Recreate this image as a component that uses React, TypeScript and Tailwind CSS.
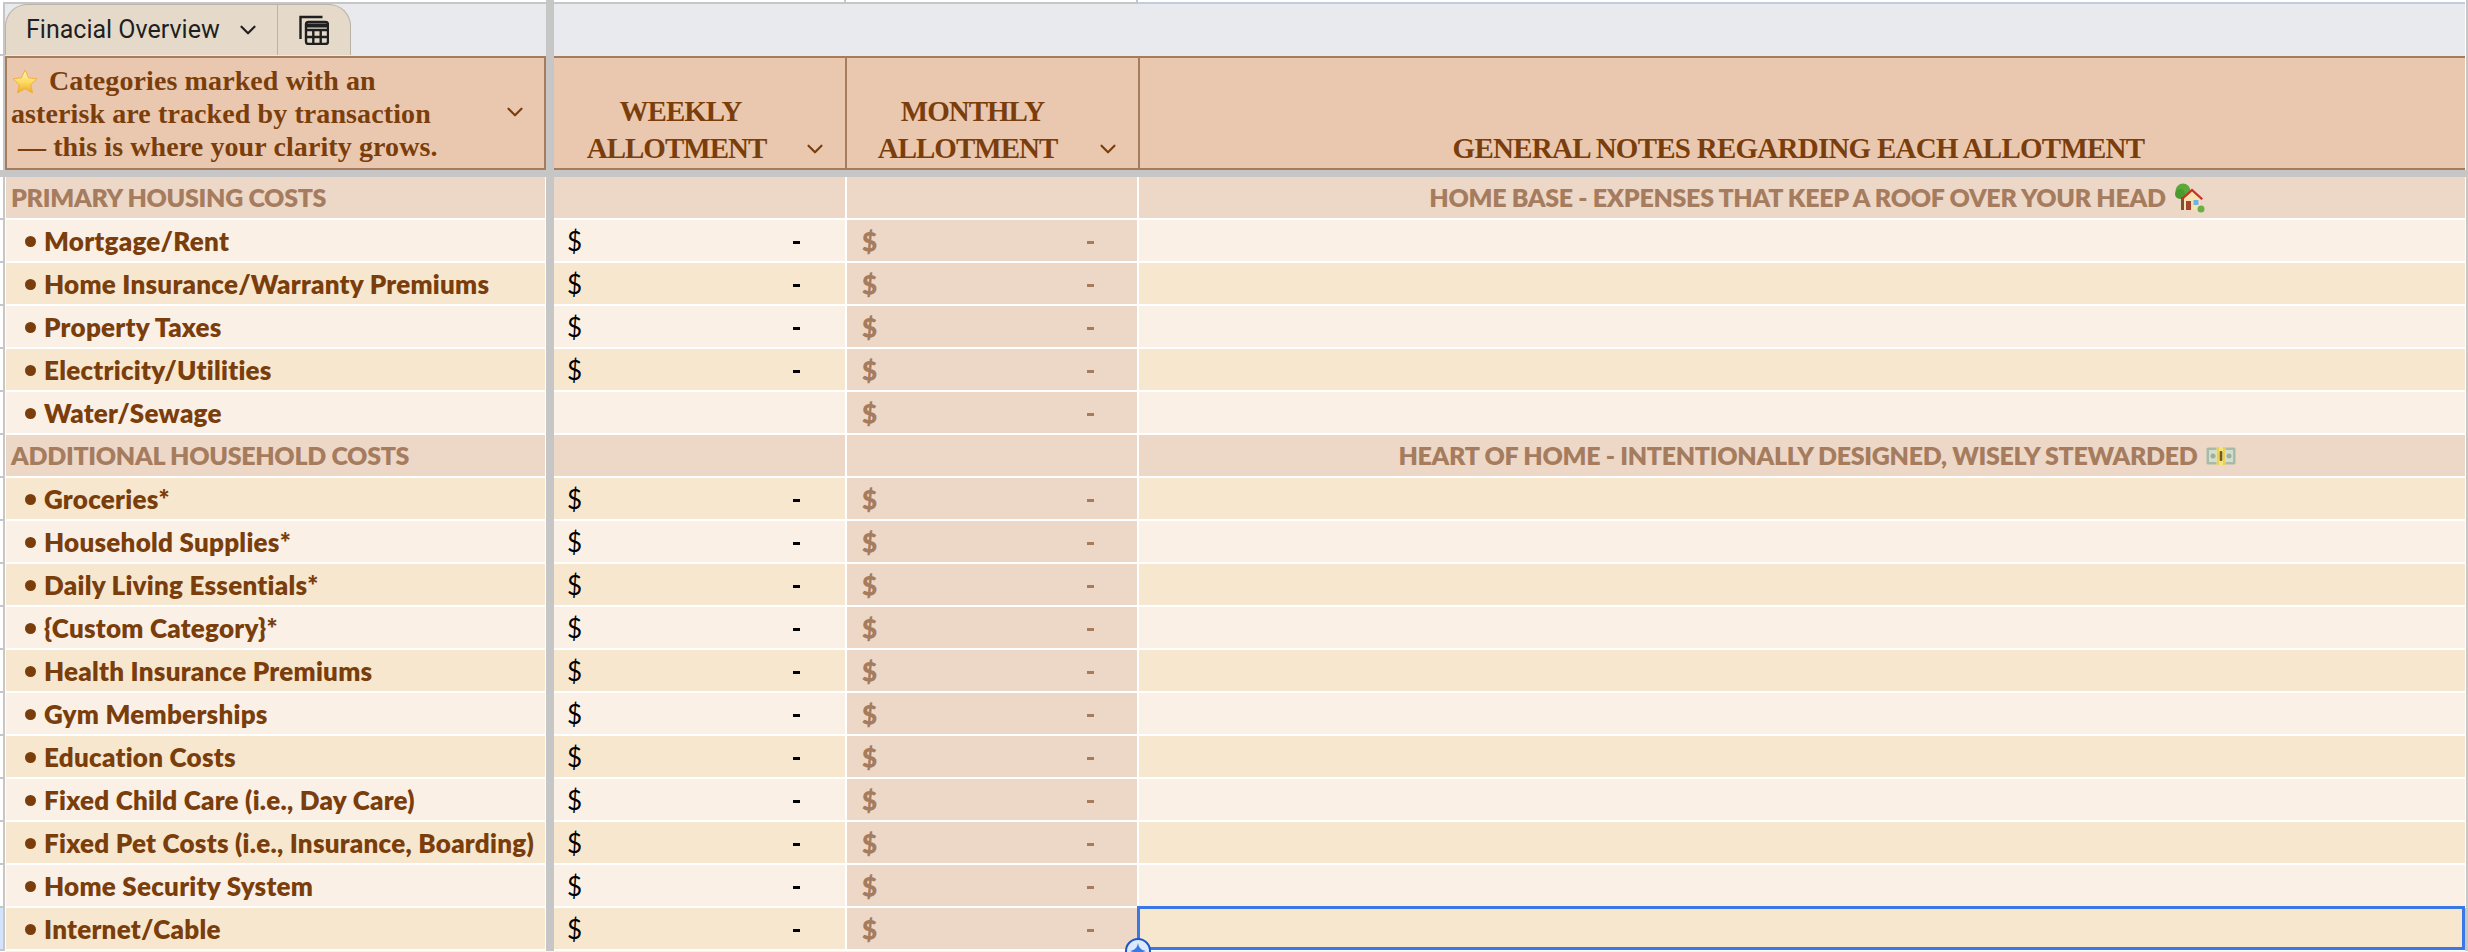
import { ChevronDown } from "lucide-react"

const SERIF = "font-['Liberation_Serif',serif] font-bold"
const SECTION_TEXT = "font-['Lato',sans-serif] font-extrabold tracking-[-0.3px] text-[25px] text-[#a67c5f]"

const LIGHT = "bg-[#faf0e6]"
const TAN = "bg-[#f7e7ce]"
const SECTION = "bg-[#edd8c8]"

type Item = { label: string; shade?: string; noWeekly?: boolean; active?: boolean }

const housing: Item[] = [
  { label: "Mortgage/Rent", shade: LIGHT },
  { label: "Home Insurance/Warranty Premiums", shade: TAN },
  { label: "Property Taxes", shade: LIGHT },
  { label: "Electricity/Utilities", shade: TAN },
  { label: "Water/Sewage", shade: LIGHT, noWeekly: true },
]

const household: Item[] = [
  { label: "Groceries*", shade: TAN },
  { label: "Household Supplies*", shade: LIGHT },
  { label: "Daily Living Essentials*", shade: TAN },
  { label: "{Custom Category}*", shade: LIGHT },
  { label: "Health Insurance Premiums", shade: TAN },
  { label: "Gym Memberships", shade: LIGHT },
  { label: "Education Costs", shade: TAN },
  { label: "Fixed Child Care (i.e., Day Care)", shade: LIGHT },
  { label: "Fixed Pet Costs (i.e., Insurance, Boarding)", shade: TAN },
  { label: "Home Security System", shade: LIGHT },
  { label: "Internet/Cable", shade: TAN, active: true },
]

function Gutter({ active }: { active?: boolean }) {
  return (
    <div className="flex h-full w-[6px] shrink-0">
      <div className={`h-full w-[3px] border-b-2 border-[#c6c6c6] ${active ? "bg-[#d3e3fd]" : "bg-white"}`} />
      <div className="h-full w-[2px] bg-[#c6c6c6]" />
      <div className="h-full w-px bg-white" />
    </div>
  )
}

function Frozen() {
  return <div className="h-full w-[8px] shrink-0 bg-[#c6c6c6]" />
}

function RightEdge({ active }: { active?: boolean }) {
  return <div className={`h-full w-[3px] shrink-0 ${active ? "bg-[#c6c6c6]" : "border-r-2 border-[#c6c6c6]"}`} />
}

function StarIcon() {
  return (
    <svg width="26" height="25" viewBox="0 0 26 25" className="shrink-0">
      <defs>
        <linearGradient id="star" x1="0" y1="0" x2="0" y2="1">
          <stop offset="0" stopColor="#fff6b8" />
          <stop offset="0.55" stopColor="#fcd95e" />
          <stop offset="1" stopColor="#f2a52c" />
        </linearGradient>
      </defs>
      <path
        d="M13 1l3.6 7.8 8.4 1-6.2 5.8 1.700 8.400L13 19.800 5.500 24l1.700-8.400L1 9.800l8.400-1z"
        fill="url(#star)"
        stroke="#f0b040"
        strokeWidth="1"
        strokeLinejoin="round"
      />
    </svg>
  )
}

function HouseIcon() {
  return (
    <svg width="31" height="30" viewBox="0 0 31 30" className="shrink-0">
      <circle cx="9" cy="8" r="7.500" fill="#5da83a" />
      <circle cx="6" cy="11" r="5" fill="#4c9a2f" />
      <rect x="7" y="14" width="3" height="13" fill="#7a5230" />
      <path d="M10 15l8-7 8 7v12H10z" fill="#f8e3b0" />
      <path d="M7 15.500L18 5.500l11 10-1.600 1.400L18 8.500 8.600 16.900z" fill="#c9302c" />
      <rect x="12" y="18" width="5" height="9" fill="#a5432e" />
      <rect x="19.500" y="17" width="5" height="5" fill="#6fb2e8" />
      <circle cx="27" cy="26" r="3.500" fill="#69b044" />
    </svg>
  )
}

function MoneyIcon() {
  return (
    <svg width="30" height="18" viewBox="0 0 30 18" className="shrink-0">
      <rect x="0.500" y="0.500" width="29" height="17" rx="1.500" fill="#a9bba6" />
      <rect x="3" y="3" width="24" height="12" fill="#d3ddd0" />
      <circle cx="7" cy="9" r="2.500" fill="#9db09a" />
      <circle cx="23" cy="9" r="2.500" fill="#9db09a" />
      <rect x="10.500" y="0" width="9" height="18" fill="#f6e27a" />
      <rect x="11.500" y="0" width="1" height="18" fill="#e2b93b" />
      <rect x="17.500" y="0" width="1" height="18" fill="#e2b93b" />
      <rect x="13.700" y="4" width="2.600" height="10" rx="1" fill="#6a5a22" />
    </svg>
  )
}

function SheetIcon() {
  return (
    <svg width="30" height="30" viewBox="0 0 30 30" fill="none" stroke="#1f1f1f" strokeWidth="2.400">
      <path d="M1.500 24V2h22" />
      <rect x="7" y="7" width="22" height="22" rx="2.500" />
      <path d="M7 15h22M7 22h22M14.300 15v14M21.700 15v14" />
      <path d="M7 10.500h22" strokeWidth="4" />
    </svg>
  )
}

function Sparkle() {
  return (
    <div className="absolute -bottom-[15px] -left-[14px] z-10 flex h-[26px] w-[26px] items-center justify-center rounded-full border-2 border-[#1a56c4] bg-[#dce8fc]">
      <svg width="16" height="16" viewBox="0 0 16 16">
        <path d="M8 0c.8 4.600 2.800 6.800 8 8-5.200 1.200-7.200 3.400-8 8-.8-4.600-2.800-6.800-8-8 5.200-1.200 7.200-3.400 8-8z" fill="#3b78e7" />
      </svg>
    </div>
  )
}

function HeaderCell({ top, bottom, inset, topInset }: { top: string; bottom: string; inset: string; topInset: string }) {
  return (
    <div className={`relative flex h-full w-[293px] shrink-0 flex-col items-center justify-end border-r-2 border-[#a67c5f] pb-[1px] ${inset} text-[#7a3e0c]`}>
      <div className={`${SERIF} ${topInset} text-[29px] leading-[37px] tracking-[-1px]`}>{top}</div>
      <div className={`${SERIF} text-[29px] leading-[37px] tracking-[-1px]`}>{bottom}</div>
      <ChevronDown size={26} strokeWidth={2} className="absolute bottom-[6px] right-[17px] text-[#7a3e0c]" />
    </div>
  )
}

function SectionRow({ title, note, icon }: { title: string; note: string; icon: React.ReactNode }) {
  return (
    <div className="flex h-[43px]">
      <Gutter />
      <div className={`${SECTION} flex h-full w-[539px] shrink-0 items-center border-b-2 border-white pl-[5px] ${SECTION_TEXT}`}>
        {title}
      </div>
      <div className="w-px shrink-0" />
      <Frozen />
      <div className={`${SECTION} h-full w-[293px] shrink-0 border-b-2 border-r-2 border-white`} />
      <div className={`${SECTION} h-full w-[292px] shrink-0 border-b-2 border-r-2 border-white`} />
      <div className={`${SECTION} flex h-full flex-1 items-center justify-center gap-[8px] border-b-2 border-white pl-[30px] ${SECTION_TEXT}`}>
        {note}
        {icon}
      </div>
      <RightEdge />
    </div>
  )
}

function ItemRow({ item }: { item: Item }) {
  return (
    <div className="flex h-[43px]">
      <Gutter active={item.active} />
      <div className={`${item.shade} flex h-full w-[539px] shrink-0 items-center gap-[8px] border-b-2 border-white pl-[19px] pt-[1px] font-['Lato',sans-serif] text-[26px] font-extrabold tracking-[0.25px] text-[#7a3e0c]`}>
        <span className="h-[11px] w-[11px] shrink-0 rounded-full bg-[#7a3e0c]" />
        <span className="whitespace-nowrap">{item.label}</span>
      </div>
      <div className="w-px shrink-0" />
      <Frozen />
      <div className={`${item.shade} flex h-full w-[293px] shrink-0 items-center justify-between border-b-2 border-r-2 border-white pl-[13px] pr-[45px] pt-[1px] font-['Lato',sans-serif] text-[26px] text-black`}>
        {!item.noWeekly && (
          <>
            <span>$</span>
            <span className="mt-[3px] h-[3px] w-[7px] bg-black" />
          </>
        )}
      </div>
      <div className={`${SECTION} flex h-full w-[292px] shrink-0 items-center justify-between border-b-2 border-r-2 border-white pl-[15px] pr-[43px] pt-[1px] font-['Lato',sans-serif] text-[26px] font-extrabold text-[#a67c5f]`}>
        <span>$</span>
        <span className="mt-[3px] h-[3px] w-[7px] bg-[#a67c5f]" />
      </div>
      <div className={`${item.shade} relative h-full flex-1 border-b-2 border-white`}>
        {item.active && (
          <>
            <div className="absolute -bottom-px -left-[2px] -top-[2px] right-0 border-[3px] border-[#3b78e7]" />
            <Sparkle />
          </>
        )}
      </div>
      <RightEdge active={item.active} />
    </div>
  )
}

export default function App() {
  return (
    <div className="h-[952px] w-[2468px] overflow-hidden bg-white">
      {/* column ticks above the tab strip */}
      <div className="flex h-[4px]">
        <div className="h-full w-[3px] shrink-0" />
        <div className="h-full w-[543px] shrink-0 border-b-2 border-[#c6c6c6]" />
        <Frozen />
        <div className="h-full w-[292px] shrink-0 border-b-2 border-r-2 border-[#c6c6c6]" />
        <div className="h-full w-[292px] shrink-0 border-b-2 border-r-2 border-[#c6c6c6]" />
        <div className="h-full flex-1 border-b-2 border-[#bfcde0]" />
        <RightEdge />
      </div>

      <div className="flex h-[52px]">
        <div className="flex h-full w-[5px] shrink-0">
          <div className="h-full w-[3px] border-b-2 border-[#c6c6c6]" />
          <div className="h-full w-[2px] bg-[#c6c6c6]" />
        </div>
        <div className="h-full w-[541px] shrink-0 bg-[#e8eaed]">
          <div className="flex h-[51px] w-[346px] rounded-t-[22px] border border-b-0 border-[#b9b2a6] bg-[#e5daca]">
            <div className="flex h-full w-[272px] shrink-0 items-center border-r border-[#b9b2a6] pl-[20px] font-['Roboto',sans-serif] text-[25px] text-[#1f1f1f]">
              Finacial Overview
              <ChevronDown size={26} strokeWidth={2} className="ml-[15px]" />
            </div>
            <div className="flex h-full flex-1 items-center justify-center">
              <SheetIcon />
            </div>
          </div>
        </div>
        <Frozen />
        <div className="h-full flex-1 bg-[#e8eaed]" />
        <RightEdge />
      </div>

      {/* frozen header row */}
      <div className="flex h-[114px]">
        <div className="flex h-full w-[5px] shrink-0">
          <div className="h-full w-[3px]" />
          <div className="h-full w-[2px] bg-[#c6c6c6]" />
        </div>
        <div className="relative flex h-full w-[541px] shrink-0 flex-col justify-center border-2 border-[#a67c5f] bg-[#eac8af] pl-[4px] pt-[2px] text-[#7a3e0c]">
          <div className={`${SERIF} flex h-[32px] items-center gap-[11px] pl-[1px] text-[28px] tracking-[0.1px]`}>
            <StarIcon />
            Categories marked with an
          </div>
          <div className={`${SERIF} h-[33px] text-[28px] leading-[33px] tracking-[0.1px]`}>asterisk are tracked by transaction</div>
          <div className={`${SERIF} h-[33px] pl-[7px] text-[28px] leading-[33px] tracking-[0.1px]`}>— this is where your clarity grows.</div>
          <ChevronDown size={26} strokeWidth={2} className="absolute right-[16px] top-[41px] text-[#7a3e0c]" />
        </div>
        <Frozen />
        <div className="flex h-full flex-1 border-y-2 border-[#a67c5f] bg-[#eac8af]">
          <HeaderCell top="WEEKLY" bottom="ALLOTMENT" inset="pr-[46px]" topInset="ml-[8px]" />
          <HeaderCell top="MONTHLY" bottom="ALLOTMENT" inset="pr-[50px]" topInset="ml-[10px]" />
          <div className={`${SERIF} flex h-full flex-1 items-end justify-center pb-[1px] pr-[8px] text-[29px] leading-[37px] tracking-[-0.75px] text-[#7a3e0c]`}>
            GENERAL NOTES REGARDING EACH ALLOTMENT
          </div>
        </div>
        <RightEdge />
      </div>

      <div className="h-[7px] bg-[#c6c6c6]" />

      <SectionRow title="PRIMARY HOUSING COSTS" note="HOME BASE - EXPENSES THAT KEEP A ROOF OVER YOUR HEAD" icon={<HouseIcon />} />
      {housing.map((item) => (
        <ItemRow key={item.label} item={item} />
      ))}
      <SectionRow title="ADDITIONAL HOUSEHOLD COSTS" note="HEART OF HOME - INTENTIONALLY DESIGNED, WISELY STEWARDED" icon={<MoneyIcon />} />
      {household.map((item) => (
        <ItemRow key={item.label} item={item} />
      ))}
      <div className="flex h-px pl-[6px]">
        <div className="h-full w-full bg-[#faf0e6]" />
      </div>
    </div>
  )
}
